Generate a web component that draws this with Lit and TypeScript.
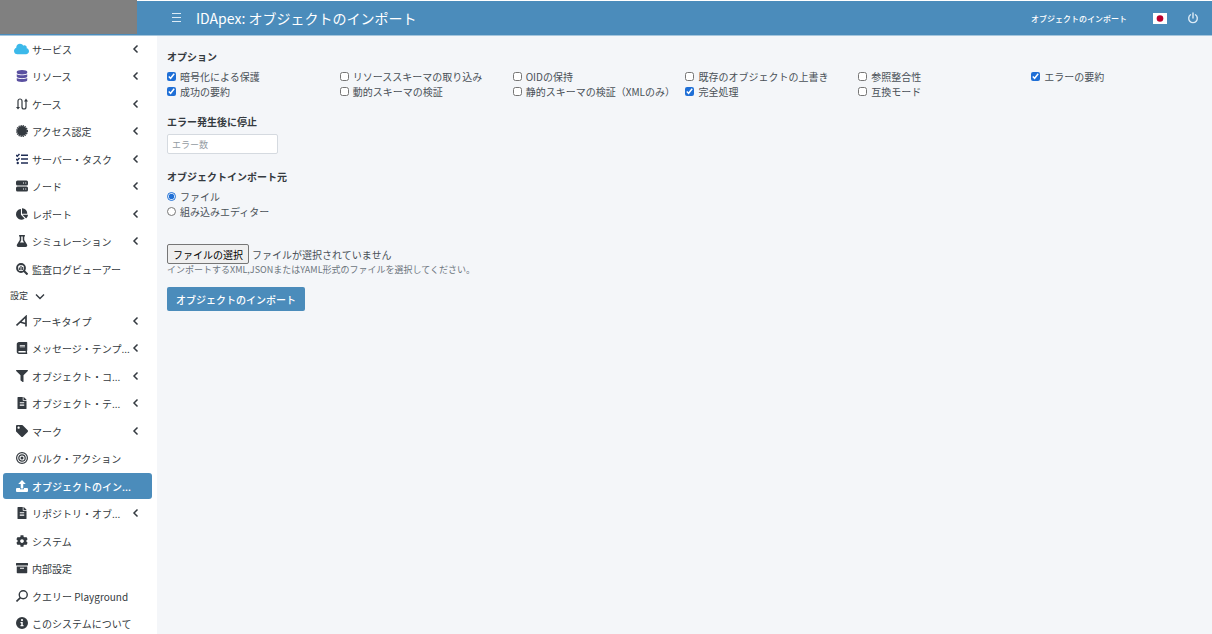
import { LitElement, html, css, svg, nothing, type TemplateResult } from "lit";
import { customElement, property, state } from "lit/decorators.js";
import { classMap } from "lit/directives/class-map.js";

interface Icon {
  box: string;
  body: TemplateResult;
}

const solid = (box: string, d: string): Icon => ({
  box,
  body: svg`<path fill="currentColor" fill-rule="evenodd" d=${d}></path>`,
});

const ICONS: Record<string, Icon> = {
  cloud: solid("0 0 640 512", "M537.6 226.6c4.1-10.7 6.4-22.4 6.4-34.6 0-53-43-96-96-96-19.7 0-38.1 6-53.3 16.2C367 64.2 315.3 32 256 32c-88.4 0-160 71.6-160 160 0 2.7.1 5.4.2 8.1C40.2 219.8 0 273.2 0 336c0 79.5 64.5 144 144 144h368c70.7 0 128-57.3 128-128 0-61.9-44-113.6-102.4-125.4z"),
  database: solid("0 0 448 512", "M448 73.1v45.7C448 159.1 347.7 192 224 192S0 159.1 0 118.9V73.1C0 32.9 100.3 0 224 0s224 32.9 224 73.1zM448 176v102.9C448 319.1 347.7 352 224 352S0 319.1 0 278.9V176c48.1 33.1 136.2 48.6 224 48.6S399.9 209.1 448 176zm0 160v102.9C448 479.1 347.7 512 224 512S0 479.1 0 438.9V336c48.1 33.1 136.2 48.6 224 48.6S399.9 369.1 448 336z"),
  route: {
    box: "0 0 24 24",
    body: svg`<path fill="none" stroke="currentColor" stroke-width="2.4" d="M4 20V6a4 4 0 0 1 8 0v12a4 4 0 0 0 8 0V5"></path><path fill="currentColor" d="M20 1l4 6h-8zM4 23l-4-5h8z"></path>`,
  },
  certificate: {
    box: "0 0 24 24",
    body: svg`<circle cx="12" cy="12" r="10" fill="currentColor"></circle><circle cx="12" cy="12" r="10.8" fill="none" stroke="currentColor" stroke-width="2.4" stroke-dasharray="2.6 1.64"></circle>`,
  },
  tasks: {
    box: "0 0 24 24",
    body: svg`<path fill="none" stroke="currentColor" stroke-width="3" d="M0 4l2.500 2.500L7 2M0 12l2.500 2.500L7 10M10 4.500h14M10 12h14M10 20h14"></path><circle cx="3.500" cy="20" r="2.400" fill="currentColor"></circle>`,
  },
  server: solid("0 0 24 24", "M3 1h18a3 3 0 0 1 3 3v4a3 3 0 0 1-3 3H3a3 3 0 0 1-3-3V4a3 3 0 0 1 3-3zM14 5v2h2V5zM18.500 5v2h2V5zM3 13h18a3 3 0 0 1 3 3v4a3 3 0 0 1-3 3H3a3 3 0 0 1-3-3v-4a3 3 0 0 1 3-3zM14 17v2h2v-2zM18.500 17v2h2v-2z"),
  pie: solid("0 0 544 512", "M527.79 288H290.5l158.03 158.03c6.04 6.04 15.98 6.53 22.19.68 38.7-36.46 65.32-85.61 73.13-140.86 1.34-9.46-6.51-17.85-16.06-17.85zm-15.83-64.8C503.72 103.74 408.26 8.28 288.8.04 279.68-.59 272 7.1 272 16.24V240h223.77c9.14 0 16.82-7.68 16.19-16.8zM224 288V50.71c0-9.55-8.39-17.4-17.84-16.06C86.99 51.49-4.1 155.6.14 280.37 4.5 408.51 114.83 513.59 243.03 511.98c50.4-.63 96.97-16.87 135.26-44.03 7.9-5.6 8.42-17.23 1.57-24.08L224 288z"),
  flask: solid("0 0 448 512", "M437.2 403.5L320 215V64h8c13.3 0 24-10.7 24-24V24c0-13.3-10.7-24-24-24H120c-13.3 0-24 10.7-24 24v16c0 13.3 10.7 24 24 24h8v151L10.8 403.5C-18.5 450.6 15.3 512 70.9 512h306.2c55.7 0 89.4-61.5 60.1-108.5zM137.9 320l48.2-77.6c3.7-5.2 5.8-11.6 5.8-18.4V64h64v160c0 6.9 2.2 13.2 5.8 18.4l48.2 77.6h-172z"),
  audit: {
    box: "0 0 24 24",
    body: svg`<circle cx="10" cy="10" r="8" fill="none" stroke="currentColor" stroke-width="3.6"></circle><path fill="none" stroke="currentColor" stroke-width="4" d="M15.500 15.500L23 23"></path><path fill="none" stroke="currentColor" stroke-width="2.4" d="M6.600 9v5M10 5.500v9M13.400 8v6"></path>`,
  },
  archetype: {
    box: "0 0 24 24",
    body: svg`<path fill="none" stroke="currentColor" stroke-width="3.4" d="M1 21L20 3v20M20 17.500L8 14"></path>`,
  },
  book: solid("0 0 448 512", "M448 360V24c0-13.3-10.7-24-24-24H96C43 0 0 43 0 96v320c0 53 43 96 96 96h328c13.3 0 24-10.7 24-24v-16c0-7.5-3.5-14.3-8.9-18.7-4.2-15.4-4.2-59.3 0-74.7 5.4-4.3 8.9-11.1 8.9-18.6zM128 134c0-3.3 2.7-6 6-6h212c3.3 0 6 2.7 6 6v20c0 3.3-2.7 6-6 6H134c-3.3 0-6-2.7-6-6v-20zm0 64c0-3.3 2.7-6 6-6h212c3.3 0 6 2.7 6 6v20c0 3.3-2.7 6-6 6H134c-3.3 0-6-2.7-6-6v-20zm253.4 250H96c-17.7 0-32-14.3-32-32 0-17.6 14.4-32 32-32h285.4c-1.9 17.1-1.9 46.9 0 64z"),
  filter: solid("0 0 512 512", "M488 0H24C2.7 0-8 25.9 7 41l185 185v206c0 7.8 3.8 15.2 10.2 19.7l80 56C298 518.7 320 507.5 320 488V226L505 41C520 25.9 509.3 0 488 0z"),
  file: solid("0 0 384 512", "M224 136V0H24C10.7 0 0 10.7 0 24v464c0 13.3 10.7 24 24 24h336c13.3 0 24-10.7 24-24V160H248c-13.2 0-24-10.8-24-24zm64 236c0 6.6-5.4 12-12 12H108c-6.6 0-12-5.4-12-12v-8c0-6.6 5.4-12 12-12h168c6.6 0 12 5.4 12 12v8zm0-64c0 6.6-5.4 12-12 12H108c-6.6 0-12-5.4-12-12v-8c0-6.6 5.4-12 12-12h168c6.6 0 12 5.4 12 12v8zm0-72v8c0 6.6-5.4 12-12 12H108c-6.6 0-12-5.4-12-12v-8c0-6.6 5.4-12 12-12h168c6.6 0 12 5.4 12 12zm96-114.1v6.1H256V0h6.1c6.4 0 12.5 2.5 17 7l97.9 98c4.5 4.5 7 10.6 7 16.9z"),
  tag: solid("0 0 512 512", "M0 252.1V48C0 21.5 21.5 0 48 0h204.100a48 48 0 0 1 33.900 14.100l211.900 211.900c18.700 18.700 18.700 49.100 0 67.900L293.800 497.900c-18.700 18.700-49.100 18.700-67.900 0L14.100 286.100A48 48 0 0 1 0 252.100zM112 64c-26.500 0-48 21.500-48 48s21.500 48 48 48 48-21.500 48-48-21.500-48-48-48z"),
  target: {
    box: "0 0 24 24",
    body: svg`<g fill="none" stroke="currentColor" stroke-width="2.4"><circle cx="12" cy="12" r="10.8"></circle><circle cx="12" cy="12" r="6.4"></circle></g><circle cx="12" cy="12" r="3" fill="currentColor"></circle>`,
  },
  upload: solid("0 0 24 24", "M12 0l7.500 8h-5v9h-5V8h-5zM2 16h6v2.500h8V16h6a2 2 0 0 1 2 2v4a2 2 0 0 1-2 2H2a2 2 0 0 1-2-2v-4a2 2 0 0 1 2-2z"),
  cog: solid("0 0 512 512", "M487.4 315.7l-42.6-24.6c4.3-23.2 4.3-47 0-70.2l42.6-24.6c4.9-2.8 7.1-8.6 5.5-14-11.1-35.6-30-67.8-54.7-94.6-3.8-4.1-10-5.1-14.8-2.3L380.8 110c-17.9-15.4-38.5-27.3-60.8-35.1V25.8c0-5.6-3.9-10.5-9.4-11.7-36.7-8.2-74.3-7.8-109.2 0-5.5 1.2-9.4 6.1-9.4 11.7V75c-22.2 7.9-42.8 19.8-60.8 35.1L88.7 85.5c-4.9-2.8-11-1.9-14.8 2.3-24.7 26.7-43.6 58.9-54.7 94.6-1.7 5.4.6 11.2 5.5 14L67.3 221c-4.3 23.2-4.3 47 0 70.2l-42.6 24.6c-4.9 2.8-7.1 8.6-5.5 14 11.1 35.6 30 67.8 54.7 94.6 3.8 4.1 10 5.1 14.8 2.3l42.6-24.6c17.9 15.4 38.5 27.3 60.8 35.1v49.2c0 5.6 3.9 10.5 9.4 11.7 36.7 8.2 74.3 7.8 109.2 0 5.5-1.2 9.4-6.1 9.4-11.7v-49.2c22.2-7.9 42.8-19.8 60.8-35.1l42.6 24.6c4.9 2.8 11 1.9 14.8-2.3 24.7-26.7 43.6-58.9 54.7-94.6 1.5-5.5-.7-11.3-5.6-14.1zM256 336c-44.1 0-80-35.9-80-80s35.9-80 80-80 80 35.9 80 80-35.9 80-80 80z"),
  archive: solid("0 0 24 24", "M1 2h22a1 1 0 0 1 1 1v4H0V3a1 1 0 0 1 1-1zM1.500 9h21v12a1.500 1.500 0 0 1-1.500 1.500H3A1.500 1.500 0 0 1 1.500 21zM8 11.500v2h8v-2z"),
  search: {
    box: "0 0 24 24",
    body: svg`<circle cx="14.500" cy="9.500" r="8" fill="none" stroke="currentColor" stroke-width="2.8"></circle><path fill="none" stroke="currentColor" stroke-width="3.2" d="M8.800 15.200L1 23"></path>`,
  },
  info: solid("0 0 24 24", "M12 0a12 12 0 1 0 0 24 12 12 0 1 0 0-24zM12 4a2.200 2.200 0 1 1 0 4.400A2.200 2.200 0 1 1 12 4zM9 10h4.500v6H15v2.500H9V16h1.500v-3.500H9z"),
  left: {
    box: "0 0 12 12",
    body: svg`<path fill="none" stroke="currentColor" stroke-width="1.5" d="M7.500 2.500L4 6l3.500 3.500"></path>`,
  },
  down: {
    box: "0 0 12 12",
    body: svg`<path fill="none" stroke="currentColor" stroke-width="1.4" d="M2 4.500l4 4 4-4"></path>`,
  },
  menu: {
    box: "0 0 12 12",
    body: svg`<path fill="none" stroke="currentColor" d="M2 1.500h9M2 5.500h9M2 9.500h9"></path>`,
  },
  power: {
    box: "0 0 12 12",
    body: svg`<path fill="none" stroke="currentColor" stroke-width="1.4" stroke-linecap="round" d="M3.500 2.800a4.300 4.300 0 1 0 5 0M6 1v5"></path>`,
  },
  japan: {
    box: "0 0 14 11",
    body: svg`<rect width="14" height="11" fill="#fff"></rect><circle cx="7" cy="5.500" r="3.300" fill="#bc002d"></circle>`,
  },
};

@customElement("ui-icon")
export class UiIcon extends LitElement {
  static styles = css`
    :host {
      display: block;
      flex: none;
      width: 12px;
      height: 12px;
    }
    .glyph {
      display: block;
      width: 100%;
      height: 100%;
    }
  `;

  @property() name = "";

  render() {
    const icon = ICONS[this.name];
    return icon
      ? html`<svg class="glyph" viewBox=${icon.box} aria-hidden="true">${icon.body}</svg>`
      : nothing;
  }
}

interface MenuItem {
  label: string;
  icon: string;
  tone?: string;
  expandable?: boolean;
  active?: boolean;
}

const MAIN_ITEMS: MenuItem[] = [
  { label: "サービス", icon: "cloud", tone: "sky", expandable: true },
  { label: "リソース", icon: "database", tone: "violet", expandable: true },
  { label: "ケース", icon: "route", expandable: true },
  { label: "アクセス認定", icon: "certificate", expandable: true },
  { label: "サーバー・タスク", icon: "tasks", tone: "navy", expandable: true },
  { label: "ノード", icon: "server", expandable: true },
  { label: "レポート", icon: "pie", expandable: true },
  { label: "シミュレーション", icon: "flask", expandable: true },
  { label: "監査ログビューアー", icon: "audit" },
];

const SETTING_ITEMS: MenuItem[] = [
  { label: "アーキタイプ", icon: "archetype", expandable: true },
  { label: "メッセージ・テンプ...", icon: "book", expandable: true },
  { label: "オブジェクト・コ...", icon: "filter", expandable: true },
  { label: "オブジェクト・テ...", icon: "file", expandable: true },
  { label: "マーク", icon: "tag", expandable: true },
  { label: "バルク・アクション", icon: "target" },
  { label: "オブジェクトのイン...", icon: "upload", active: true },
  { label: "リポジトリ・オブ...", icon: "file", expandable: true },
  { label: "システム", icon: "cog" },
  { label: "内部設定", icon: "archive" },
  { label: "クエリー Playground", icon: "search" },
  { label: "このシステムについて", icon: "info" },
];

@customElement("side-menu")
export class SideMenu extends LitElement {
  static styles = css`
    :host {
      display: block;
      background: #fff;
    }
    .list {
      list-style: none;
      margin: 0;
      padding: 0 5px 0 3px;
    }
    .item {
      margin-bottom: 1px;
    }
    .item:nth-child(even) {
      margin-bottom: 2px;
    }
    .link {
      display: flex;
      align-items: center;
      gap: 4px;
      height: 26px;
      padding: 0 10px 0 13px;
      border-radius: 3px;
      color: #343a40;
      text-decoration: none;
      white-space: nowrap;
    }
    .label {
      flex: 1;
      min-width: 0;
    }
    .active {
      background: #4b8cbb;
      color: #fff;
      font-weight: 500;
    }
    .sky {
      width: 15px;
      margin: 0 -1px 0 -2px;
      color: #3cb9ea;
    }
    .violet {
      color: #5a50a0;
    }
    .navy {
      color: #1f2d54;
    }
    .group {
      display: flex;
      align-items: center;
      gap: 6px;
      height: 25px;
      padding: 0 10px;
      border: 0;
      background: none;
      color: #343a40;
      font: inherit;
      font-size: 9px;
    }
  `;

  private renderItems(items: MenuItem[]) {
    return html`
      <ul class="list">
        ${items.map(
          (item) => html`
            <li class="item">
              <a class=${classMap({ link: true, active: !!item.active })} href="#">
                <ui-icon class=${item.tone ?? ""} name=${item.icon}></ui-icon>
                <span class="label">${item.label}</span>
                ${item.expandable ? html`<ui-icon name="left"></ui-icon>` : nothing}
              </a>
            </li>
          `
        )}
      </ul>
    `;
  }

  render() {
    return html`
      <nav>
        ${this.renderItems(MAIN_ITEMS)}
        <button class="group" type="button">設定 <ui-icon name="down"></ui-icon></button>
        ${this.renderItems(SETTING_ITEMS)}
      </nav>
    `;
  }
}

const OPTIONS = [
  { id: "protect", label: "暗号化による保護", checked: true },
  { id: "fetch-schema", label: "リソーススキーマの取り込み", checked: false },
  { id: "keep-oid", label: "OIDの保持", checked: false },
  { id: "overwrite", label: "既存のオブジェクトの上書き", checked: false },
  { id: "integrity", label: "参照整合性", checked: false },
  { id: "sum-errors", label: "エラーの要約", checked: true },
  { id: "sum-success", label: "成功の要約", checked: true },
  { id: "dynamic-schema", label: "動的スキーマの検証", checked: false },
  { id: "static-schema", label: "静的スキーマの検証（XMLのみ）", checked: false },
  { id: "full", label: "完全処理", checked: true },
  { id: "compat", label: "互換モード", checked: false },
];

@customElement("import-form")
export class ImportForm extends LitElement {
  static styles = css`
    :host {
      display: block;
      padding: 13px 8px 13px 10px;
    }
    .title {
      display: block;
      margin: 0;
      font-size: 10px;
      line-height: 15px;
      font-weight: 700;
      color: #343a40;
    }
    .options {
      display: grid;
      grid-template-columns: repeat(6, 1fr);
      margin: 5px 0 15px;
    }
    .choice {
      display: flex;
      align-items: center;
      gap: 4px;
      height: 15px;
      white-space: nowrap;
    }
    .tick {
      width: 9px;
      height: 9px;
      margin: 0;
      accent-color: #1f6fd6;
    }
    .number {
      display: block;
      box-sizing: border-box;
      width: 111px;
      height: 20px;
      margin: 5px 0 15px;
      padding: 0 4px;
      border: 1px solid #d5dae0;
      border-radius: 2px;
      background: #fff;
      color: #495057;
      font: inherit;
      font-size: 9px;
    }
    .number::placeholder {
      color: #939ba2;
    }
    .source {
      margin: 0 0 25px;
      padding: 0;
      border: 0;
    }
    .source .title {
      padding: 0 0 5px;
    }
    .file {
      display: flex;
      align-items: center;
      gap: 3px;
    }
    .pick {
      height: 20px;
      padding: 0 5px;
      border: 1px solid #767676;
      border-radius: 2px;
      background: #efefef;
      color: #000;
      font: inherit;
    }
    .hint {
      margin: 0 0 11px;
      font-size: 9px;
      line-height: 12px;
      color: #6c757d;
    }
    .submit {
      height: 24px;
      padding: 0 9px;
      border: 0;
      border-radius: 2px;
      background: #4b8cbb;
      color: #fff;
      font: inherit;
      font-weight: 500;
    }
  `;

  @state() private fileName = "ファイルが選択されていません";

  private openPicker() {
    this.renderRoot.querySelector<HTMLInputElement>("#file")?.click();
  }

  private onFile(event: Event) {
    const file = (event.target as HTMLInputElement).files?.[0];
    if (file) this.fileName = file.name;
  }

  render() {
    return html`
      <h2 class="title">オプション</h2>
      <div class="options">
        ${OPTIONS.map(
          (option) => html`
            <label class="choice" for=${option.id}>
              <input class="tick" type="checkbox" id=${option.id} ?checked=${option.checked} />
              ${option.label}
            </label>
          `
        )}
      </div>
      <label class="title" for="errors">エラー発生後に停止</label>
      <input class="number" id="errors" type="text" inputmode="numeric" placeholder="エラー数" />
      <fieldset class="source">
        <legend class="title">オブジェクトインポート元</legend>
        <label class="choice" for="from-file">
          <input class="tick" type="radio" name="source" id="from-file" checked />ファイル
        </label>
        <label class="choice" for="from-editor">
          <input class="tick" type="radio" name="source" id="from-editor" />組み込みエディター
        </label>
      </fieldset>
      <div class="file">
        <button class="pick" type="button" @click=${this.openPicker}>ファイルの選択</button>
        <span>${this.fileName}</span>
        <input id="file" type="file" hidden @change=${this.onFile} />
      </div>
      <p class="hint">インポートするXML,JSONまたはYAML形式のファイルを選択してください。</p>
      <button class="submit" type="button">オブジェクトのインポート</button>
    `;
  }
}

@customElement("app-root")
export class AppRoot extends LitElement {
  static styles = css`
    :host {
      display: grid;
      grid-template-columns: 157px minmax(0, 1fr);
      grid-template-rows: auto 1fr;
      height: 100vh;
      overflow: hidden;
      background: #f4f6f9;
      color: #495057;
      font-family: "Noto Sans CJK JP", sans-serif;
      font-size: 10px;
      line-height: 15px;
    }
    .top {
      grid-column: 1 / -1;
      display: flex;
      align-items: flex-start;
      border-bottom: 1px solid #a5c6dd;
      background: #4b8cbb;
      color: #fff;
    }
    .brand {
      width: 137px;
      height: 34px;
      background: #808080;
    }
    .bar {
      flex: 1;
      display: flex;
      align-items: center;
      height: 34px;
      padding: 0 13px 0 33px;
      border-top: 1px solid #fff;
    }
    .tool {
      padding: 0;
      border: 0;
      background: none;
      color: #dcebf6;
    }
    .heading {
      flex: 1;
      margin: 0 0 0 14px;
      font-size: 14px;
      line-height: 20px;
      font-weight: 400;
    }
    .crumb {
      margin-right: 26px;
      color: #fff;
      font-size: 8px;
      font-weight: 500;
      text-decoration: none;
    }
    .flag {
      width: 14px;
      height: 11px;
      margin-right: 20px;
    }
    .side {
      overflow: hidden;
    }
  `;

  render() {
    return html`
      <header class="top">
        <div class="brand"></div>
        <div class="bar">
          <button class="tool" type="button" aria-label="メニュー"><ui-icon name="menu"></ui-icon></button>
          <h1 class="heading">IDApex: オブジェクトのインポート</h1>
          <a class="crumb" href="#">オブジェクトのインポート</a>
          <ui-icon class="flag" name="japan"></ui-icon>
          <button class="tool" type="button" aria-label="ログアウト"><ui-icon name="power"></ui-icon></button>
        </div>
      </header>
      <side-menu class="side"></side-menu>
      <main><import-form></import-form></main>
    `;
  }
}
